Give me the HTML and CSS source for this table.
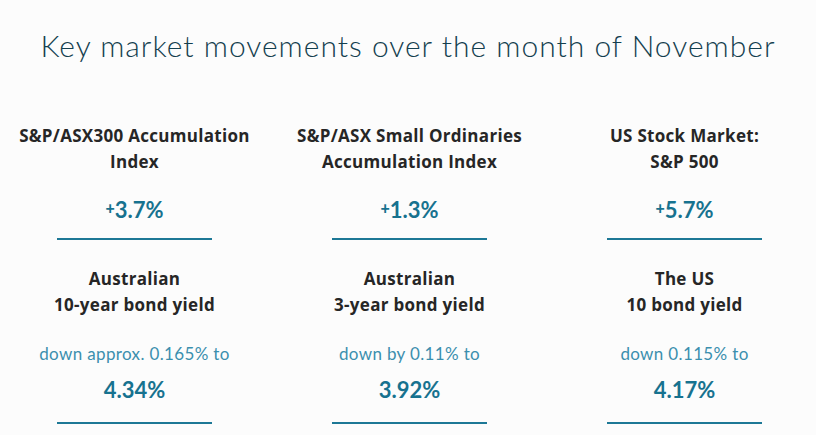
FILE: index.html
```html
<!DOCTYPE html>
<html lang="en">
<head>
<meta charset="utf-8">
<title>Key market movements</title>
<link rel="stylesheet" href="styles.css">
</head>
<body>
<h1 class="title">Key market movements over the month of November</h1>
<div class="grid">
  <div class="card">
    <div class="heading">S&amp;P/ASX300 Accumulation<br>Index</div>
    <div class="value"><span class="plus">+</span>3.7%</div>
    <div class="rule"></div>
  </div>
  <div class="card">
    <div class="heading">S&amp;P/ASX Small Ordinaries<br>Accumulation Index</div>
    <div class="value"><span class="plus">+</span>1.3%</div>
    <div class="rule"></div>
  </div>
  <div class="card">
    <div class="heading">US Stock Market:<br>S&amp;P 500</div>
    <div class="value"><span class="plus">+</span>5.7%</div>
    <div class="rule"></div>
  </div>
  <div class="card card-bond">
    <div class="heading">Australian<br>10-year bond yield</div>
    <div class="sub">down approx. 0.165% to</div>
    <div class="value">4.34%</div>
    <div class="rule"></div>
  </div>
  <div class="card card-bond">
    <div class="heading">Australian<br>3-year bond yield</div>
    <div class="sub">down by 0.11% to</div>
    <div class="value">3.92%</div>
    <div class="rule"></div>
  </div>
  <div class="card card-bond">
    <div class="heading">The US<br>10 bond yield</div>
    <div class="sub">down 0.115% to</div>
    <div class="value">4.17%</div>
    <div class="rule"></div>
  </div>
</div>
</body>
</html>
```
FILE: styles.css
```css
html, body {
  margin: 0;
  padding: 0;
  background: #fcfcfc;
}
body {
  font-family: "Lato", "Liberation Sans", sans-serif;
}
.title {
  margin: 27px 0 0;
  font-family: "Lato", sans-serif;
  font-weight: 300;
  font-size: 30px;
  line-height: 36px;
  color: #143f4f;
  text-align: center;
  letter-spacing: 1px;
}
.grid {
  display: grid;
  grid-template-columns: repeat(3, 255px);
  column-gap: 20px;
  row-gap: 25px;
  padding-left: 7px;
  margin-top: 59px;
}
.card {
  display: flex;
  flex-direction: column;
  align-items: center;
  text-align: center;
}
.heading {
  font-family: "Open Sans", sans-serif;
  font-weight: 700;
  font-size: 17px;
  line-height: 26px;
  letter-spacing: 0.3px;
  color: #262626;
  margin-top: 1px;
}
.value {
  margin-top: 18px;
  font-family: "Lato", sans-serif;
  font-weight: 700;
  font-size: 22px;
  line-height: 30px;
  color: #17728f;
}
.plus {
  font-size: 16px;
  font-weight: 900;
  vertical-align: 4px;
}
.rule {
  width: 155px;
  height: 2px;
  margin-top: 13px;
  background: #1d7896;
}
.sub {
  margin-top: 24px;
  font-family: "Lato", sans-serif;
  font-weight: 400;
  font-size: 17px;
  line-height: 24px;
  letter-spacing: 0.35px;
  color: #3b8fae;
}
.card-bond .value {
  margin-top: 9px;
}
.card-bond .rule {
  margin-top: 17px;
}
```
